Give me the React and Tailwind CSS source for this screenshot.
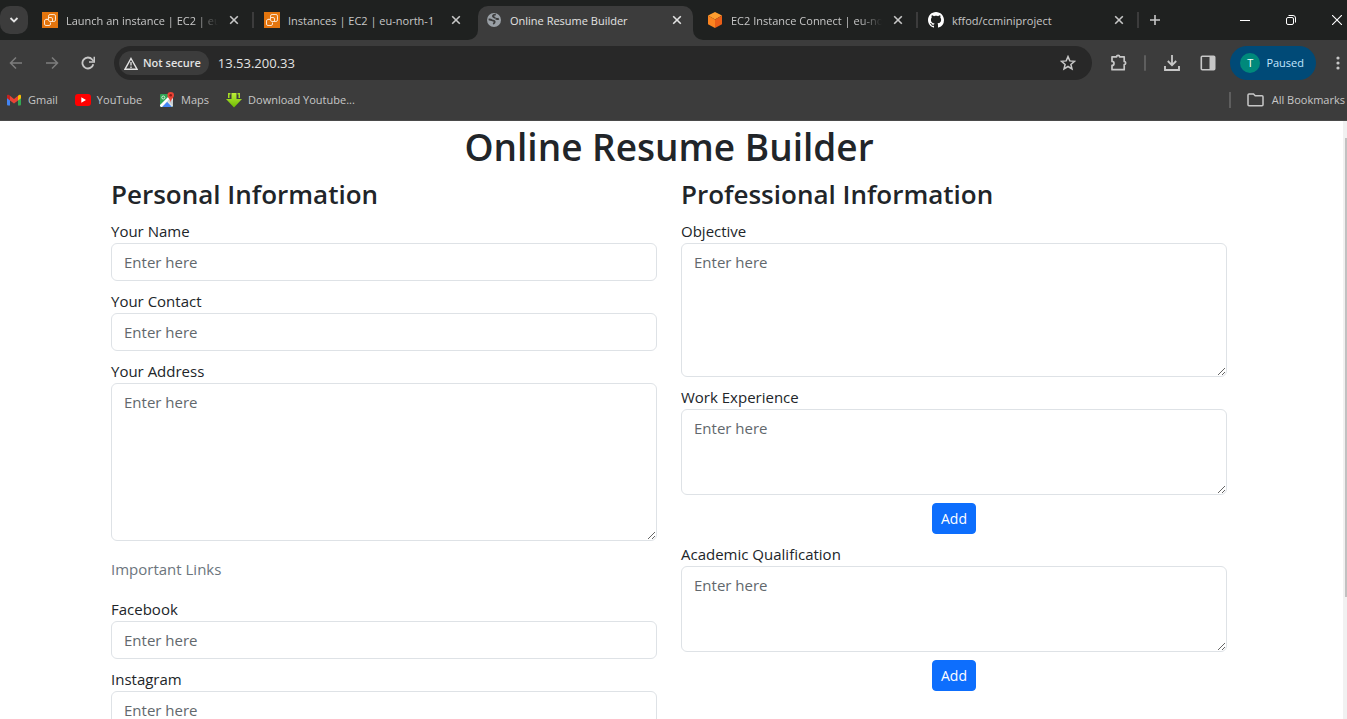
import React, { useId } from "react";

const svgProps = { fill: "none", xmlns: "http://www.w3.org/2000/svg", "aria-hidden": true };

function Ec2Icon() {
  return (
    <svg {...svgProps} width="16" height="16" viewBox="0 0 16 16">
      <defs>
        <linearGradient id="ec2" x1="0" y1="16" x2="16" y2="0">
          <stop stopColor="#c8511b" />
          <stop offset="1" stopColor="#f90" />
        </linearGradient>
      </defs>
      <rect width="16" height="16" fill="url(#ec2)" />
      <g stroke="#fbe3cc" strokeWidth="1">
        <rect x="6.5" y="2.5" width="7" height="7" rx="1.6" />
        <path d="M5 6.500A1.500 1.500 0 0 0 4.500 7.500M6.500 5.500h2.500a1.500 1.500 0 0 1 1.500 1.500v2.500" />
        <path d="M6 7.500H4A1.500 1.500 0 0 0 2.500 9v3A1.500 1.500 0 0 0 4 13.500h3A1.500 1.500 0 0 0 8.500 12v-1.500" />
      </g>
    </svg>
  );
}

function GlobeIcon() {
  return (
    <svg {...svgProps} width="16" height="16" viewBox="0 0 16 16">
      <circle cx="8" cy="8" r="7" fill="#9aa0a6" />
      <path
        d="M9.800 2.600c-1.800-.2-3 .5-2.900 1.600.1 1.200 1.500 1.200 2.500 1.600M2.600 7.600c1.300-.3 2.500.1 3.400.7.900.6 2.300.3 2.700 1.300.3 1-.5 1.700-1.500 2.300M9.600 6.300c1 .9 2.100.9 3.200.3"
        stroke="#3c3c3c"
        strokeWidth="1.800"
      />
    </svg>
  );
}

function CubeIcon() {
  return (
    <svg {...svgProps} width="16" height="16" viewBox="0 0 16 16">
      <path d="M8 0l7 3.500-7 4-7-4z" fill="#ff9d2e" />
      <path d="M1 3.500l7 4V16l-7-3.700z" fill="#fb8420" />
      <path d="M15 3.500l-7 4V16l7-3.700z" fill="#ea5e17" />
    </svg>
  );
}

function GithubIcon() {
  return (
    <svg {...svgProps} width="16" height="16" viewBox="0 0 16 16">
      <path
        fill="#fff"
        d="M8 0C3.580 0 0 3.580 0 8c0 3.540 2.290 6.530 5.470 7.590.4.070.55-.17.55-.38 0-.19-.01-.82-.01-1.490-2.010.37-2.530-.49-2.690-.94-.09-.23-.48-.94-.82-1.130-.28-.15-.68-.52-.01-.53.63-.01 1.080.58 1.230.82.72 1.210 1.870.87 2.330.66.070-.52.28-.87.51-1.070-1.780-.2-3.640-.89-3.640-3.950 0-.87.31-1.590.82-2.150-.08-.2-.36-1.020.08-2.120 0 0 .67-.21 2.200.82.64-.18 1.320-.27 2-.27s1.360.09 2 .27c1.530-1.040 2.200-.82 2.200-.82.44 1.100.16 1.920.08 2.120.51.56.82 1.270.82 2.150 0 3.070-1.870 3.750-3.650 3.950.29.25.54.73.54 1.480 0 1.070-.01 1.930-.01 2.200 0 .21.15.46.55.38A8.010 8.010 0 0 0 16 8c0-4.420-3.580-8-8-8z"
      />
    </svg>
  );
}

function CloseIcon() {
  return (
    <svg {...svgProps} width="16" height="16" viewBox="0 0 16 16">
      <path d="M4.200 4.200l7.600 7.600M11.800 4.200l-7.600 7.600" stroke="currentColor" strokeWidth="1.600" />
    </svg>
  );
}

const tabs = [
  { title: "Launch an instance | EC2 | eu-north-1", icon: <Ec2Icon />, width: "w-[222px]", divider: true, fade: true },
  { title: "Instances | EC2 | eu-north-1", icon: <Ec2Icon />, width: "w-[222px]" },
  { title: "Online Resume Builder", icon: <GlobeIcon />, width: "w-[221px]", active: true },
  { title: "EC2 Instance Connect | eu-north-1", icon: <CubeIcon />, width: "w-[221px]", divider: true, fade: true },
  { title: "kffod/ccminiproject", icon: <GithubIcon />, width: "w-[221px]", divider: true },
];

function Tab({ tab }) {
  return (
    <div className={"min-w-0 " + tab.width}>
      <div
        className={
          "relative mr-1.5 flex h-[34px] items-center rounded-t-[10px] pl-2 " +
          (tab.active ? "bg-[#3c3c3c] text-[#e3e3e3]" : "text-[#c7c7c7]")
        }
      >
        {tab.active && (
          <>
            <span className="absolute bottom-0 -left-2.5 size-2.5 bg-[#3c3c3c]">
              <span className="block size-full rounded-br-[10px] bg-[#1f2120]" />
            </span>
            <span className="absolute -right-2.5 bottom-0 size-2.5 bg-[#3c3c3c]">
              <span className="block size-full rounded-bl-[10px] bg-[#1f2120]" />
            </span>
          </>
        )}
        <a href="#tab" className="flex min-w-0 flex-1 items-center gap-2 pb-1.5">
          <span className="shrink-0">{tab.icon}</span>
          <span
            className={
              "w-[152px] overflow-hidden pt-px whitespace-nowrap " +
              (tab.fade ? "[mask-image:linear-gradient(to_right,black_85%,transparent)]" : "")
            }
          >
            {tab.title}
          </span>
        </a>
        <button aria-label="Close tab" className="mr-2 ml-2 shrink-0 pb-1.5">
          <CloseIcon />
        </button>
        {tab.divider && <span className="absolute top-1.5 -right-1 h-4 w-0.5 bg-[#3c3c3c]" />}
      </div>
    </div>
  );
}

function TabStrip() {
  return (
    <div className="flex h-10 shrink-0 bg-[#1f2120] pt-1.5">
      <button
        aria-label="Search tabs"
        className="mr-1.5 flex h-7 w-7 shrink-0 items-center justify-center rounded-[10px] bg-[#3c3c3c]"
      >
        <svg {...svgProps} width="10" height="6" viewBox="0 0 10 6">
          <path d="M1.500 1L5 4.500 8.500 1" stroke="#e3e3e3" strokeWidth="1.800" />
        </svg>
      </button>
      {tabs.map((tab) => (
        <Tab key={tab.title} tab={tab} />
      ))}
      <button aria-label="New tab" className="flex h-7 w-7 items-center justify-center">
        <svg {...svgProps} width="12" height="12" viewBox="0 0 12 12">
          <path d="M6 1v10M1 6h10" stroke="#c7c7c7" strokeWidth="1.600" />
        </svg>
      </button>
      <div className="-mr-[13px] ml-auto flex h-7 shrink-0">
        <button aria-label="Minimize" className="flex w-[46px] items-center justify-center">
          <svg {...svgProps} width="10" height="10" viewBox="0 0 10 10">
            <path d="M0 5.500h10" stroke="#fff" />
          </svg>
        </button>
        <button aria-label="Restore" className="flex w-[46px] items-center justify-center">
          <svg {...svgProps} width="10" height="10" viewBox="0 0 10 10">
            <rect x=".5" y="2.500" width="7" height="7" rx="1.500" stroke="#fff" />
            <path d="M2.500.5H7A2.500 2.500 0 0 1 9.500 3v4.500" stroke="#fff" />
          </svg>
        </button>
        <button aria-label="Close window" className="flex w-[46px] items-center justify-center">
          <svg {...svgProps} width="10" height="10" viewBox="0 0 10 10">
            <path d="M0 0l10 10M10 0L0 10" stroke="#fff" strokeWidth="1.100" />
          </svg>
        </button>
      </div>
    </div>
  );
}

function ToolButton({ label, children }) {
  return (
    <button aria-label={label} className="flex h-8 w-8 shrink-0 items-center justify-center">
      {children}
    </button>
  );
}

function Toolbar() {
  return (
    <div className="flex h-[46px] shrink-0 items-center">
      <div className="flex gap-1">
        <ToolButton label="Back">
          <svg {...svgProps} width="14" height="14" viewBox="0 0 14 14">
            <path d="M13 7H2M7 1.500L1.500 7 7 12.500" stroke="#7d7d7d" strokeWidth="1.500" />
          </svg>
        </ToolButton>
        <ToolButton label="Forward">
          <svg {...svgProps} width="14" height="14" viewBox="0 0 14 14">
            <path d="M1 7h11M7 1.500L12.500 7 7 12.500" stroke="#7d7d7d" strokeWidth="1.500" />
          </svg>
        </ToolButton>
        <ToolButton label="Reload">
          <svg {...svgProps} width="14" height="14" viewBox="0 0 14 14">
            <path d="M12.300 8.200A5.500 5.500 0 1 1 11.200 3.500L12.500 5" stroke="#c7c7c7" strokeWidth="1.800" />
            <path d="M13.300.8V6H8" stroke="#c7c7c7" strokeWidth="1.600" />
          </svg>
        </ToolButton>
      </div>
      <div className="ml-2.5 flex h-[34px] min-w-0 flex-1 items-center rounded-full bg-[#282828] pr-4 pl-[5px]">
        <button className="flex h-6 shrink-0 items-center gap-[5px] rounded-full bg-[#3c3c3c] pr-2 pl-[5px] font-semibold text-[#e3e3e3]">
          <svg {...svgProps} width="14" height="13" viewBox="0 0 14 13">
            <path d="M7 1.500L13 12.200H1z" stroke="#e3e3e3" strokeWidth="1.400" />
            <path d="M7 5v3.500M7 9.500v1.400" stroke="#e3e3e3" strokeWidth="1.300" />
          </svg>
          Not secure
        </button>
        <input
          aria-label="Address"
          defaultValue="13.53.200.33"
          className="ml-[9px] min-w-0 flex-1 bg-transparent text-[13px] text-[#e3e3e3] outline-none"
        />
        <button aria-label="Bookmark this page">
          <svg {...svgProps} width="16" height="16" viewBox="0 0 16 16">
            <path
              d="M8 1.600l1.800 4.300 4.700.4-3.600 3.100 1.100 4.600L8 11.500 4 14l1.100-4.600L1.500 6.300l4.700-.4z"
              stroke="#c7c7c7"
              strokeWidth="1.500"
            />
          </svg>
        </button>
      </div>
      <div className="-mr-[7px] ml-[11px] flex shrink-0 items-center">
        <ToolButton label="Extensions">
          <svg {...svgProps} width="18" height="18" viewBox="0 0 18 18">
            <path
              d="M2 2.800h4.600a1.500 1.500 0 0 1 3 0h4.600v4.700a1.500 1.500 0 0 1 0 3v5.200H2v-4.300a1.900 1.900 0 0 0 0-4z"
              stroke="#c7c7c7"
              strokeWidth="1.700"
              strokeLinejoin="round"
            />
          </svg>
        </ToolButton>
        <span className="mr-2.5 ml-[9px] h-4 w-0.5 rounded-full bg-[#5e5e5e]" />
        <div className="flex gap-1">
          <ToolButton label="Downloads">
            <svg {...svgProps} width="16" height="16" viewBox="0 0 16 16">
              <path d="M8 0v10M3.800 6L8 10.200 12.200 6" stroke="#c7c7c7" strokeWidth="1.800" />
              <path d="M1 11v4h14v-4" stroke="#c7c7c7" strokeWidth="1.900" />
            </svg>
          </ToolButton>
          <ToolButton label="Side panel">
            <svg {...svgProps} width="16" height="16" viewBox="0 0 16 16">
              <rect x="1.300" y="1.300" width="13.400" height="13.400" rx="1" stroke="#c7c7c7" strokeWidth="1.600" />
              <path d="M9.500 1H15v14H9.500z" fill="#c7c7c7" />
            </svg>
          </ToolButton>
        </div>
        <button className="mr-1.5 ml-1.5 flex h-[34px] items-center gap-1.5 rounded-full bg-[#004a77] pr-3 pl-2.5 font-medium text-[#c2e7ff]">
          <span className="flex size-5 items-center justify-center rounded-full bg-[#00897b] text-white">T</span>
          Paused
        </button>
        <ToolButton label="Menu">
          <svg {...svgProps} width="4" height="14" viewBox="0 0 4 14">
            <g fill="#c7c7c7">
              <circle cx="2" cy="2" r="1.600" />
              <circle cx="2" cy="7" r="1.600" />
              <circle cx="2" cy="12" r="1.600" />
            </g>
          </svg>
        </ToolButton>
      </div>
    </div>
  );
}

function BookmarksBar() {
  return (
    <div className="flex h-[35px] shrink-0 items-start border-b border-[#4a4a4a] pt-1 pl-1.5 text-[#c7c7c7]">
      <nav className="flex h-5 items-center gap-[17px]">
        <a href="#gmail" className="flex items-center gap-1.5">
          <svg {...svgProps} width="16" height="12" viewBox="0 0 16 12">
            <path d="M1 1.500L4 4v7.500H2a1 1 0 0 1-1-1z" fill="#4285f4" />
            <path d="M15 1.500L12 4v7.500h2a1 1 0 0 0 1-1z" fill="#34a853" />
            <path d="M12 1.800L13 1c1-.6 2-.1 2 1v2.200l-3 2.300z" fill="#fbbc04" />
            <path d="M4 1.800L3 1C2 .4 1 .9 1 2v2.200l3 2.300z" fill="#c5221f" />
            <path d="M4 1.800l4 3.100 4-3.100v4.700L8 9.500 4 6.500z" fill="#ea4335" />
          </svg>
          Gmail
        </a>
        <a href="#youtube" className="flex items-center gap-1.5">
          <svg {...svgProps} width="16" height="12" viewBox="0 0 16 12">
            <rect width="16" height="12" rx="3" fill="#f00" />
            <path d="M6.300 3.300L11 6l-4.700 2.700z" fill="#fff" />
          </svg>
          YouTube
        </a>
        <a href="#maps" className="flex items-center gap-1.5">
          <svg {...svgProps} width="16" height="16" viewBox="0 0 16 16">
            <rect x="1" y="2" width="13" height="13" rx="1" fill="#2fa353" />
            <path d="M2.500 15L14 3.500V14l-1 1z" fill="#dfe3e6" />
            <path d="M3 15l5-5.200L13 15z" fill="#4285f4" />
            <path d="M1 13L10.500 3.500l1.800 1.800L2.800 15H2l-1-1z" fill="#fff" />
            <path d="M9 8.800l5 5.200V9l-2.700-2.500z" fill="#c8ced3" />
            <circle cx="4.300" cy="5.500" r="1.500" stroke="#d8efdf" />
            <path d="M11.700 0a3.300 3.300 0 0 0-3.300 3.300c0 2.600 2.900 3.400 3.300 7.200.4-3.800 3.300-4.600 3.300-7.200A3.300 3.300 0 0 0 11.700 0z" fill="#ea4335" />
            <circle cx="11.700" cy="3.300" r="1.300" fill="#8c1d18" />
          </svg>
          Maps
        </a>
        <a href="#download" className="flex items-center gap-1.5">
          <svg {...svgProps} width="16" height="16" viewBox="0 0 16 16">
            <defs>
              <linearGradient id="arrow" x1="8" y1="0" x2="8" y2="16" gradientUnits="userSpaceOnUse">
                <stop stopColor="#c4f23c" />
                <stop offset="1" stopColor="#69b800" />
              </linearGradient>
            </defs>
            <path d="M5.500 1h5v6H16L8 15.500 0 7h5.500z" fill="url(#arrow)" />
            <path d="M2 1h2.500v1.500h-1V6H2zM14 1h-2.500v1.500h1V6H14z" fill="#a5dc24" />
          </svg>
          Download Youtube...
        </a>
      </nav>
      <div className="mr-0.5 ml-auto flex h-5 items-center">
        <span className="mr-4 h-4 w-0.5 bg-[#5e5e5e]" />
        <button className="flex items-center gap-2 whitespace-nowrap">
          <svg {...svgProps} width="17" height="14" viewBox="0 0 17 14">
            <path
              d="M1 11.800V2a1 1 0 0 1 1-1h4.500l1.700 1.800H15a1 1 0 0 1 1 1v8a1 1 0 0 1-1 1H2a1 1 0 0 1-1-1z"
              stroke="#c7c7c7"
              strokeWidth="1.500"
            />
          </svg>
          All Bookmarks
        </button>
      </div>
    </div>
  );
}

const control =
  "block w-full rounded-md border border-[#dee2e6] bg-white px-3 py-1.5 leading-6 text-[#212529] placeholder:text-[#62686d]";

function Field({ label, rows }) {
  const id = useId();
  return (
    <div className="mt-2">
      <label htmlFor={id} className="block">
        {label}
      </label>
      {rows ? (
        <textarea id={id} rows={rows} placeholder="Enter here" className={control} />
      ) : (
        <input id={id} type="text" placeholder="Enter here" className={control} />
      )}
    </div>
  );
}

function AddButton() {
  return (
    <div className="mt-2 text-center">
      <button className="rounded-sm border border-[#0d6efd] bg-[#0d6efd] px-2 py-1 text-[14px] leading-[21px] text-white">
        Add
      </button>
    </div>
  );
}

function ResumePage() {
  return (
    <main className="min-w-0 flex-1 overflow-hidden pr-[5px] text-[15px] leading-6 text-[#212529]">
      <div className="mx-auto max-w-[1140px] px-3">
        <h1 className="mb-1 text-center text-[37px] leading-[52px] font-semibold">Online Resume Builder</h1>
        <div className="grid grid-cols-2 gap-6">
          <section>
            <h3 className="text-[26px] leading-[34px] font-semibold">Personal Information</h3>
            <Field label="Your Name" />
            <Field label="Your Contact" />
            <Field label="Your Address" rows={6} />
            <p className="my-4 text-[#6c757d]">Important Links</p>
            <Field label="Facebook" />
            <Field label="Instagram" />
          </section>
          <section>
            <h3 className="text-[26px] leading-[34px] font-semibold">Professional Information</h3>
            <Field label="Objective" rows={5} />
            <Field label="Work Experience" rows={3} />
            <AddButton />
            <Field label="Academic Qualification" rows={3} />
            <AddButton />
          </section>
        </div>
      </div>
    </main>
  );
}

export default function App() {
  return (
    <div className="flex h-screen flex-col overflow-hidden bg-white font-['Segoe_UI','Open_Sans',sans-serif]">
      <header className="shrink-0 overflow-hidden bg-[#3c3c3c] text-[11px] leading-4">
        <TabStrip />
        <Toolbar />
        <BookmarksBar />
      </header>
      <div className="flex min-h-0 flex-1">
        <ResumePage />
        <div className="w-1 shrink-0 bg-[#f1f1f1] pt-[17px] pl-0.5">
          <div className="h-[79%] bg-[#c1c1c1]" />
        </div>
      </div>
    </div>
  );
}
